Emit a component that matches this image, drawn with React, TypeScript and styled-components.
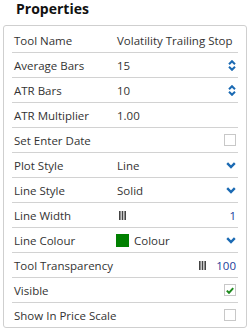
import * as React from 'react';
import styled, { createGlobalStyle } from 'styled-components';

const GlobalStyle = createGlobalStyle`
  body {
    margin: 0;
    background: #fff;
    font-family: 'Open Sans', 'Liberation Sans', sans-serif;
    color: #333;
  }
`;

const BLUE = '#1b6ab3';

const Spinner = () => (
  <svg width='8' height='11' viewBox='0 0 8 11'>
    <path d='M1 4.2 L4 1.2 L7 4.2' fill='none' stroke={BLUE} strokeWidth='2' />
    <path d='M1 6.8 L4 9.8 L7 6.8' fill='none' stroke={BLUE} strokeWidth='2' />
  </svg>
);

const Chevron = () => (
  <svg width='10' height='7' viewBox='0 0 10 7'>
    <path d='M1.2 1.2 L5 5 L8.8 1.2' fill='none' stroke={BLUE} strokeWidth='2.4' />
  </svg>
);

const Bars = () => (
  <svg width='7' height='9' viewBox='0 0 7 9'>
    <rect x='0' y='0' width='1.6' height='9' fill='#444' />
    <rect x='2.7' y='0' width='1.6' height='9' fill='#444' />
    <rect x='5.4' y='0' width='1.6' height='9' fill='#444' />
  </svg>
);

const Tick = () => (
  <svg width='8' height='7' viewBox='0 0 8 7'>
    <path d='M0.8 3.6 L3 5.8 L7.2 1.2' fill='none' stroke='#1e8a1e' strokeWidth='2' />
  </svg>
);

type Control = 'spin' | 'select' | 'check' | 'checked' | 'none';

interface IRow {
  label: string;
  value?: React.ReactNode;
  control?: Control;
}

export default function App() {
  const rows: IRow[] = [
    {label: 'Tool Name', value: 'Volatility Trailing Stop'},
    {label: 'Average Bars', value: '15', control: 'spin'},
    {label: 'ATR Bars', value: '10', control: 'spin'},
    {label: 'ATR Multiplier', value: '1.00'},
    {label: 'Set Enter Date', control: 'check'},
    {label: 'Plot Style', value: 'Line', control: 'select'},
    {label: 'Line Style', value: 'Solid', control: 'select'},
    {label: 'Line Width', value: <SliderValue><Bars /><Number>1</Number></SliderValue>},
    {label: 'Line Colour', value: <ColourValue><Swatch color='#008000' />Colour</ColourValue>, control: 'select'},
    {label: 'Tool Transparency', value: <SliderValue $right><Bars /><Number>100</Number></SliderValue>},
    {label: 'Visible', control: 'checked'},
    {label: 'Show In Price Scale', control: 'check'},
  ];

  return (
    <Page>
      <GlobalStyle />
      <Title>Properties</Title>
      <Panel>
        {rows.map((row, i) => (
          <Row key={i} $last={i === rows.length - 1}>
            <Label>{row.label}</Label>
            <Value>{row.value}</Value>
            {row.control === 'spin' && <Control><Spinner /></Control>}
            {row.control === 'select' && <Control><Chevron /></Control>}
            {row.control === 'check' && <Control><CheckBox /></Control>}
            {row.control === 'checked' && <Control><CheckBox><Tick /></CheckBox></Control>}
          </Row>
        ))}
      </Panel>
    </Page>
  );
}

const Page = styled.div`
  width: 250px;
  height: 334px;
  padding: 0 3px;
  box-sizing: border-box;
`;

const Title = styled.div`
  height: 25px;
  padding-left: 13px;
  font-size: 14px;
  font-weight: 700;
  line-height: 18px;
  color: #111;
`;

const Panel = styled.div`
  border: 1px solid #cfcfcf;
  border-radius: 3px;
  padding: 2px 8px 0;
`;

const Row = styled.div<{ $last?: boolean }>`
  display: flex;
  align-items: center;
  height: 24px;
  border-bottom: ${p => p.$last ? 'none' : '1px solid #d2d2d2'};
  padding: 0 2px 0 2px;
  font-size: 11.5px;
`;

const Label = styled.div`
  width: 103px;
  flex-shrink: 0;
  white-space: nowrap;
`;

const Value = styled.div`
  flex: 1;
  display: flex;
  align-items: center;
  white-space: nowrap;
  min-width: 0;
`;

const SliderValue = styled.div<{ $right?: boolean }>`
  flex: 1;
  display: flex;
  align-items: center;
  justify-content: space-between;
  padding-left: ${p => p.$right ? '82px' : '2px'};
`;

const Number = styled.span`
  color: #23409a;
`;

const ColourValue = styled.div`
  display: flex;
  align-items: center;
  gap: 5px;
  margin-left: -1px;
`;

const Swatch = styled.span<{ color: string }>`
  width: 13px;
  height: 13px;
  background: ${p => p.color};
`;

const Control = styled.div`
  display: flex;
  align-items: center;
  justify-content: flex-end;
  margin-left: auto;
`;

const CheckBox = styled.div`
  width: 10px;
  height: 10px;
  border: 1px solid #c8c8c8;
  background: #fff;
  display: flex;
  align-items: center;
  justify-content: center;
`;
